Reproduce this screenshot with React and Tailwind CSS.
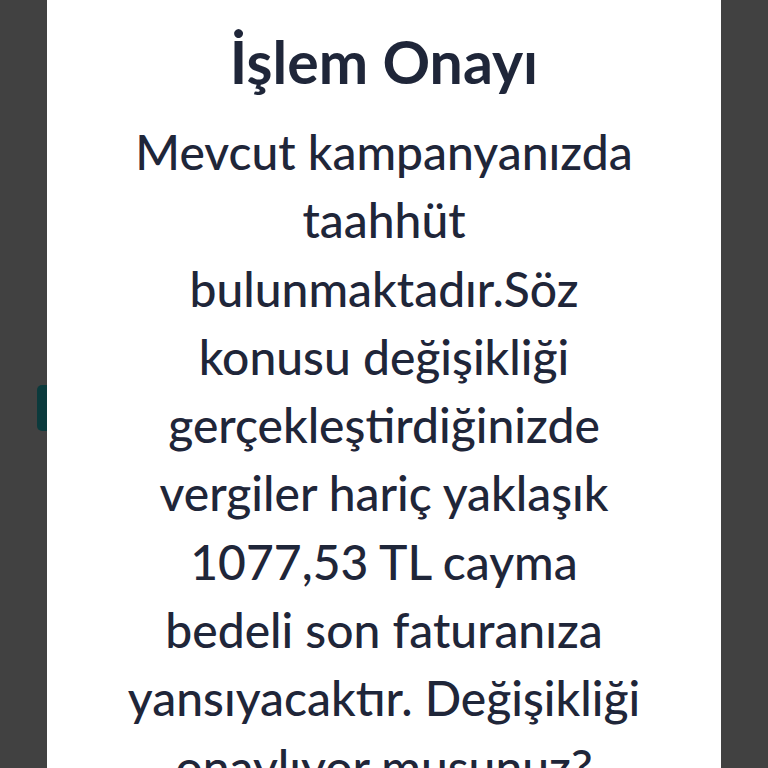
export default function App() {
  const lines = [
    "Mevcut kampanyanızda",
    "taahhüt",
    "bulunmaktadır.Söz",
    "konusu değişikliği",
    "gerçekleştirdiğinizde",
    "vergiler hariç yaklaşık",
    "1077,53 TL cayma",
    "bedeli son faturanıza",
    "yansıyacaktır. Değişikliği",
    "onaylıyor musunuz?",
  ];
  return (
    <div className="relative w-[768px] h-[768px] overflow-hidden bg-[#414141] flex justify-center" style={{ fontFamily: "Lato, 'Noto Sans', sans-serif" }}>
      <div className="absolute left-[37px] top-[385px] w-[14px] h-[46px] rounded-l-[5px] bg-[#0b3a3c]" />
      <div className="relative w-[674px] h-[900px] bg-white flex flex-col items-center pt-[28px] text-[#1f2639]">
        <h1 className="text-[59px] leading-[68px] font-bold whitespace-nowrap">İşlem Onayı</h1>
        <div className="mt-[22px] flex flex-col items-center text-[48px] leading-[68.3px] font-medium">
          {lines.map((l) => (
            <p key={l} className="whitespace-nowrap">{l}</p>
          ))}
        </div>
      </div>
    </div>
  );
}
